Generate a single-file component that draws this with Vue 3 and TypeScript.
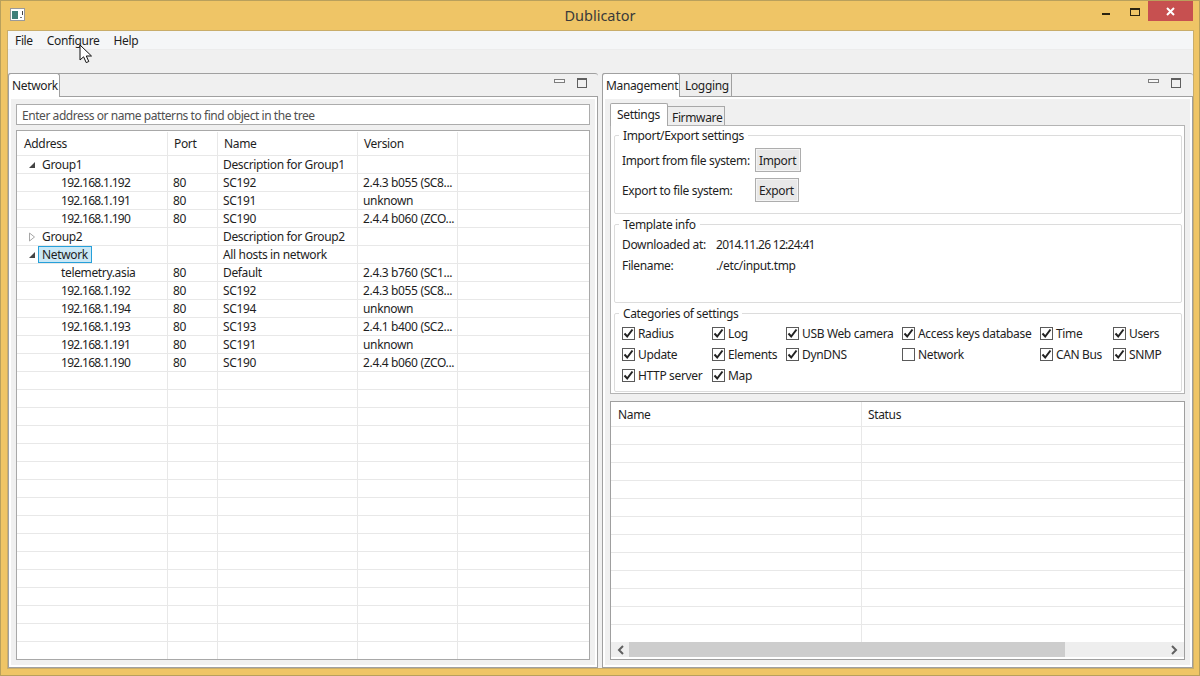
<script setup lang="ts">
interface Row { kind: 'group' | 'host'; open?: boolean; selected?: boolean; address: string; port: string; name: string; version: string }

const hostRows: Row[] = [
  { kind: 'group', open: true, address: 'Group1', port: '', name: 'Description for Group1', version: '' },
  { kind: 'host', address: '192.168.1.192', port: '80', name: 'SC192', version: '2.4.3 b055 (SC8...' },
  { kind: 'host', address: '192.168.1.191', port: '80', name: 'SC191', version: 'unknown' },
  { kind: 'host', address: '192.168.1.190', port: '80', name: 'SC190', version: '2.4.4 b060 (ZCO...' },
  { kind: 'group', open: false, address: 'Group2', port: '', name: 'Description for Group2', version: '' },
  { kind: 'group', open: true, selected: true, address: 'Network', port: '', name: 'All hosts in network', version: '' },
  { kind: 'host', address: 'telemetry.asia', port: '80', name: 'Default', version: '2.4.3 b760 (SC1...' },
  { kind: 'host', address: '192.168.1.192', port: '80', name: 'SC192', version: '2.4.3 b055 (SC8...' },
  { kind: 'host', address: '192.168.1.194', port: '80', name: 'SC194', version: 'unknown' },
  { kind: 'host', address: '192.168.1.193', port: '80', name: 'SC193', version: '2.4.1 b400 (SC2...' },
  { kind: 'host', address: '192.168.1.191', port: '80', name: 'SC191', version: 'unknown' },
  { kind: 'host', address: '192.168.1.190', port: '80', name: 'SC190', version: '2.4.4 b060 (ZCO...' },
]
const isIp = (s: string): boolean => /^[0-9.]+$/.test(s)
const blankTree = Array.from({ length: 16 }, (_, i) => i)
const blankStatus = Array.from({ length: 12 }, (_, i) => i)
const categories: { label: string; on: boolean }[] = [
  { label: 'Radius', on: true }, { label: 'Log', on: true }, { label: 'USB Web camera', on: true },
  { label: 'Access keys database', on: true }, { label: 'Time', on: true }, { label: 'Users', on: true },
  { label: 'Update', on: true }, { label: 'Elements', on: true }, { label: 'DynDNS', on: true },
  { label: 'Network', on: false }, { label: 'CAN Bus', on: true }, { label: 'SNMP', on: true },
  { label: 'HTTP server', on: true }, { label: 'Map', on: true },
]
</script>

<template>
  <div class="window">
    <header class="titlebar">
      <svg class="app-icon" width="15" height="13" viewBox="0 0 15 13">
        <rect x="0.5" y="0.5" width="14" height="12" fill="#fff" stroke="#9a9a9a" />
        <rect x="2" y="3" width="6" height="8" fill="#3f7f78" />
        <rect x="10" y="9" width="2" height="1" fill="#777" />
        <rect x="12" y="3" width="1" height="4" fill="#444" />
      </svg>
      <span class="title">Dublicator</span>
      <div class="controls">
        <span class="ctl-min"></span>
        <span class="ctl-max"></span>
        <span class="ctl-close">
          <svg width="11" height="9" viewBox="0 0 11 9"><path d="M2 1 L9 8 M9 1 L2 8" stroke="#fff" stroke-width="2" fill="none" /></svg>
        </span>
      </div>
    </header>

    <div class="client">
      <nav class="menubar">
        <span class="menu-file">File</span>
        <span class="menu-conf">Configure</span>
        <span>Help</span>
      </nav>
      <div class="toolbar"></div>

      <div class="docks">
        <section class="dock dock-left">
          <div class="dock-head">
            <div class="tab tab-active tab-network">Network</div>
            <div class="dock-btns btns-left">
              <span class="dock-min"></span>
              <span class="dock-max"></span>
            </div>
          </div>
          <div class="dock-body left-body">
            <div class="search">Enter address or name patterns to find object in the tree</div>
            <div class="tree">
              <div class="tree-row tree-header">
                <div class="cell cell-h-addr">Address</div>
                <div class="cell">Port</div>
                <div class="cell">Name</div>
                <div class="cell">Version</div>
                <div class="cell cell-last"></div>
              </div>
              <div v-for="(r, i) in hostRows" :key="i" class="tree-row">
                <div class="cell" :class="[r.kind === 'group' ? 'cell-group' : 'cell-host', { 'tight': isIp(r.address) }]">
                  <svg v-if="r.kind === 'group' && r.open" class="arrow" width="8" height="8" viewBox="0 0 8 8">
                    <path d="M7 1 V7 H1 Z" fill="#444" />
                  </svg>
                  <svg v-else-if="r.kind === 'group'" class="arrow" width="8" height="10" viewBox="0 0 8 10">
                    <path d="M1.5 1 L6.5 5 L1.5 9 Z" fill="#fff" stroke="#a6a6a6" />
                  </svg>
                  <span :class="{ selected: r.selected }">{{ r.address }}</span>
                </div>
                <div class="cell cell-port">{{ r.port }}</div>
                <div class="cell cell-name">{{ r.name }}</div>
                <div class="cell cell-name">{{ r.version }}</div>
                <div class="cell cell-last"></div>
              </div>
              <div v-for="b in blankTree" :key="'b' + b" class="tree-row">
                <div class="cell"></div><div class="cell"></div><div class="cell"></div><div class="cell"></div><div class="cell cell-last"></div>
              </div>
            </div>
          </div>
        </section>

        <section class="dock dock-right">
          <div class="dock-head">
            <div class="tab tab-active tab-mgmt">Management</div>
            <div class="tab tab-log">Logging</div>
            <div class="dock-btns btns-right">
              <span class="dock-min"></span>
              <span class="dock-max"></span>
            </div>
          </div>
          <div class="dock-body right-body">
            <div class="subtabs">
              <div class="subtab subtab-active">Settings</div>
              <div class="subtab">Firmware</div>
            </div>
            <div class="settings">
              <fieldset class="group group-import">
                <legend>Import/Export settings</legend>
                <div class="io-row">
                  <span class="io-label">Import from file system:</span>
                  <span class="btn">Import</span>
                </div>
                <div class="io-row">
                  <span class="io-label">Export to file system:</span>
                  <span class="btn">Export</span>
                </div>
              </fieldset>
              <fieldset class="group group-info">
                <legend>Template info</legend>
                <div class="info-grid">
                  <span>Downloaded at:</span><span class="tight">2014.11.26 12:24:41</span>
                  <span>Filename:</span><span>./etc/input.tmp</span>
                </div>
              </fieldset>
              <fieldset class="group group-cats">
                <legend>Categories of settings</legend>
                <div class="cats">
                  <label v-for="c in categories" :key="c.label" class="cat">
                    <span class="box">
                      <svg v-if="c.on" width="11" height="11" viewBox="0 0 11 11">
                        <path d="M1.5 5.5 L4.2 8.5 L9.5 1.5" fill="none" stroke="#222" stroke-width="2" />
                      </svg>
                    </span>
                    {{ c.label }}
                  </label>
                </div>
              </fieldset>
            </div>
            <div class="status">
              <div class="status-row status-header">
                <div class="scell">Name</div>
                <div class="scell scell-last">Status</div>
              </div>
              <div class="status-rows">
                <div v-for="b in blankStatus" :key="b" class="status-row">
                  <div class="scell"></div>
                  <div class="scell scell-last"></div>
                </div>
              </div>
              <div class="scrollbar">
                <svg width="8" height="10" viewBox="0 0 8 10"><path d="M6 1 L2 5 L6 9" fill="none" stroke="#606060" stroke-width="2" /></svg>
                <div class="track"><div class="thumb"></div></div>
                <svg width="8" height="10" viewBox="0 0 8 10"><path d="M2 1 L6 5 L2 9" fill="none" stroke="#606060" stroke-width="2" /></svg>
              </div>
            </div>
          </div>
        </section>
      </div>
    </div>

    <svg class="cursor" width="14" height="20" viewBox="0 0 14 20">
      <path d="M1 1 V16 L4.6 12.8 L7.2 18.6 L9.8 17.5 L7.3 12 L12.5 12 Z" fill="#fff" stroke="#111" stroke-width="1" stroke-linejoin="miter" />
    </svg>
  </div>
</template>

<style>
html, body { margin: 0; padding: 0; overflow: hidden; }
</style>

<style scoped>
.window {
  position: relative;
  width: 1200px;
  height: 676px;
  box-sizing: border-box;
  display: flex;
  flex-direction: column;
  background: #efc566;
  border: 1px solid #b9a05c;
  font-family: "Noto Sans", "Open Sans", sans-serif;
  font-size: 12px;
  color: #1e1e1e;
  letter-spacing: -0.35px;
  overflow: hidden;
}
.titlebar {
  position: relative;
  height: 30px;
  flex: none;
  display: flex;
  align-items: center;
  justify-content: center;
}
.app-icon { position: absolute; left: 9px; top: 7px; }
.title { font-size: 14.5px; color: #3a3a3a; letter-spacing: 0; margin-top: -2px; }
.controls { position: absolute; right: 6px; top: 0; display: flex; align-items: flex-start; }
.ctl-min { width: 8px; height: 2px; background: #2b2410; margin: 12px 20px 0 0; }
.ctl-max { width: 8px; height: 5px; border: 1px solid #2b2410; border-top-width: 2px; margin: 7px 8px 0 0; box-sizing: content-box; }
.ctl-close {
  width: 45px; height: 20px; background: #c75050;
  display: flex; align-items: center; justify-content: center;
}
.client {
  flex: 1;
  margin: 0 6px 7px 7px;
  min-height: 0;
  display: flex;
  flex-direction: column;
  background: #f0f0f0;
  outline: 1px solid #c9ad6a;
}
.menubar {
  height: 19px;
  flex: none;
  background: #f5f6f7;
  display: flex;
  align-items: center;
  padding: 1px 0 0 7px;
  box-sizing: border-box;
  border-bottom: 1px solid #ececec;
}
.menu-file { margin-right: 14px; }
.menu-conf { margin-right: 14px; }
.toolbar { height: 23px; flex: none; }
.docks { flex: 1; min-height: 0; display: flex; gap: 4px; }
.dock { position: relative; display: flex; flex-direction: column; min-height: 0; }
.dock-left { width: 590px; }
.dock-right { flex: 1; min-width: 0; }
.dock-head {
  height: 24px;
  flex: none;
  display: flex;
  border-top: 1px solid #a0a0a0;
  border-radius: 3px 3px 0 0;
  box-sizing: border-box;
  border-bottom: 1px solid #a0a0a0;
}
.tab {
  height: 24px;
  box-sizing: border-box;
  padding: 3px 0 0 5px;
  margin-top: -1px;
  border: 1px solid #a0a0a0;
  border-left: none;
  background: #eeeeee;
}
.tab-active { background: #fff; border-bottom: none; border-left: 1px solid #a0a0a0; border-radius: 3px 3px 0 0; padding-left: 3px; }
.tab-network { width: 52px; }
.tab-mgmt { width: 78px; }
.tab-log { width: 52px; }
.dock-btns { margin-left: auto; display: flex; align-items: flex-start; padding-top: 4px; }
.btns-left { padding-right: 11px; }
.btns-right { padding-right: 12px; }
.dock-min { width: 9px; height: 2px; border: 1px solid #7d7d7d; background: #f8f8f8; margin: 1px 12px 0 0; box-sizing: content-box; }
.dock-max { width: 8px; height: 7px; border: 1px solid #5f5f5f; border-top-width: 2px; box-sizing: content-box; }
.dock-body {
  flex: 1;
  min-height: 0;
  display: flex;
  flex-direction: column;
  border: 1px solid #a0a0a0;
  border-top: none;
  box-shadow: inset 0 0 0 2px #fff;
}
.left-body { padding: 7px 7px 7px 7px; }
.search {
  height: 21px;
  flex: none;
  box-sizing: border-box;
  background: #fff;
  border: 1px solid #acacac;
  padding: 2px 0 0 5px;
  color: #505050;
  letter-spacing: -0.44px;
}
.tree {
  flex: 1;
  min-height: 0;
  margin-top: 5px;
  overflow: hidden;
  background: #fff;
  border: 1px solid #a8a8a8;
}
.tree-row {
  display: grid;
  grid-template-columns: 151px 50px 140px 100px 1fr;
  height: 18px;
  line-height: 17px;
  box-sizing: border-box;
  border-bottom: 1px solid #e8e8e8;
}
.tree-header { height: 25px; padding-top: 1px; }
.cell { border-right: 1px solid #e8e8e8; white-space: nowrap; overflow: hidden; display: flex; align-items: center; padding-left: 6px; }
.cell-h-addr { padding-left: 7px; }
.cell-last { border-right: none; }
.cell-group { padding-left: 11px; }
.cell-host { padding-left: 44px; }
.cell-port { padding-left: 5px; }
.cell-name { padding-left: 5px; }
.tight { letter-spacing: -0.7px; }
.arrow { width: 8px; margin-right: 6px; flex: none; }
.selected {
  background: #cbe8f6;
  outline: 1px solid #26a0da;
  outline-offset: -1px;
  padding: 0 4px;
  margin-left: -4px;
  height: 17px;
  line-height: 17px;
}
.right-body { padding: 6px 7px 7px 7px; }
.subtabs { display: flex; align-items: flex-end; height: 22px; flex: none; }
.subtab {
  height: 19px;
  box-sizing: border-box;
  padding: 2px 0 0 4px;
  width: 57px;
  background: #eeeeee;
  border: 1px solid #a8a8a8;
  border-left: none;
  border-bottom: none;
}
.subtab-active {
  height: 23px;
  width: 58px;
  background: #fff;
  border-left: 1px solid #a8a8a8;
  padding: 2px 0 0 6px;
  border-radius: 2px 2px 0 0;
  margin-bottom: -1px;
  position: relative;
}
.settings {
  flex: none;
  height: 269px;
  box-sizing: border-box;
  border: 1px solid #b4b4b4;
  background: #fff;
  padding: 3px 2px 0 3px;
  display: flex;
  flex-direction: column;
}
.group {
  margin: 0;
  padding: 0;
  min-width: 0;
  border: 1px solid #dcdcdc;
  border-radius: 2px;
  background: #fff;
  height: 85px;
  box-sizing: border-box;
  flex: none;
}
.group + .group { margin-top: 4px; }
.group legend { padding: 0 4px; margin-left: -3px; line-height: 13px; height: 13px; background: #fff; }
.group-import { padding: 6px 0 0 7px; }
.io-row { display: flex; align-items: center; height: 24px; margin-bottom: 6px; }
.io-label { width: 133px; white-space: nowrap; }
.btn {
  height: 24px;
  box-sizing: border-box;
  border: 1px solid #adadad;
  background: #e8e8e8;
  padding: 3px 4px 0 3px;
  box-shadow: inset 0 0 0 1px #f4f4f4;
}
.group-info { padding: 6px 0 0 7px; }
.info-grid {
  display: grid;
  grid-template-columns: 94px 1fr;
  row-gap: 6px;
  grid-auto-rows: 15px;
  line-height: 15px;
}
.group-cats { padding: 3px 0 0 7px; }
.cats {
  display: grid;
  grid-template-columns: 90px 74px 116px 138px 73px 1fr;
  grid-auto-rows: 21px;
}
.cat { display: flex; align-items: center; white-space: nowrap; }
.box {
  width: 11px; height: 11px; flex: none; margin-right: 3px;
  border: 1px solid #5a5a5a; background: #fff;
  display: flex; align-items: center; justify-content: center;
}
.status {
  flex: 1;
  min-height: 0;
  margin-top: 7px;
  background: #fff;
  border: 1px solid #9f9f9f;
  display: flex;
  flex-direction: column;
}
.status-rows { flex: 1; min-height: 0; overflow: hidden; }
.status-row {
  display: grid;
  grid-template-columns: 251px 1fr;
  height: 18px;
  box-sizing: border-box;
  border-bottom: 1px solid #e8e8e8;
}
.status-header { height: 25px; line-height: 25px; flex: none; }
.scell { border-right: 1px solid #e8e8e8; padding-left: 7px; }
.scell-last { border-right: none; padding-left: 6px; }
.scrollbar {
  height: 15px;
  flex: none;
  display: flex;
  align-items: center;
  background: #eeeeee;
  padding: 0 6px 0 6px;
  margin-bottom: 2px;
}
.track { flex: 1; height: 15px; margin: 0 6px 0 4px; }
.thumb { width: 436px; height: 15px; background: #cdcdcd; }
.cursor { position: absolute; left: 78px; top: 43px; }
</style>
